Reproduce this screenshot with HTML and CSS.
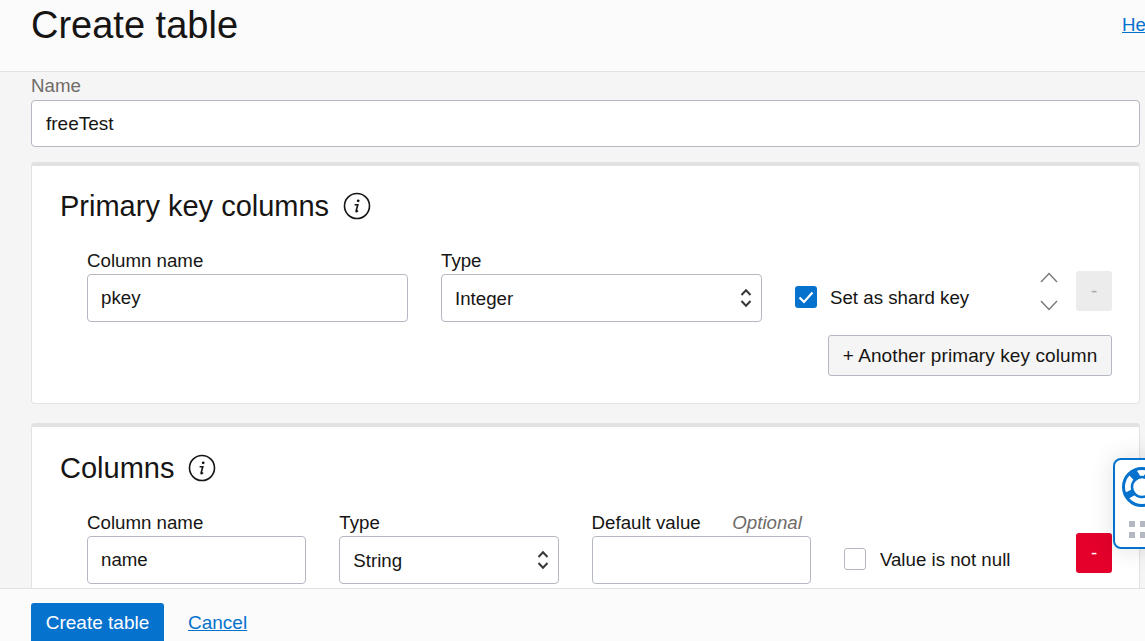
FILE: index.html
```html
<!DOCTYPE html>
<html lang="en">
<head>
    <meta charset="UTF-8">
    <meta name="viewport" content="width=device-width, initial-scale=1.0">
    <title>Create table</title>
    <link rel="stylesheet" href="styles.css">
</head>
<body>
    <div class="panel">
        <header class="panel-header">
            <h1>Create table</h1>
            <a class="help-link" href="#">Help</a>
        </header>

        <main class="panel-body">
            <label class="name-label" for="table-name">Name</label>
            <input class="text-input name-input" type="text" id="table-name" value="freeTest">

            <section class="card card-primary">
                <h2 class="card-title">
                    Primary key columns
                    <svg class="info-icon" viewBox="0 0 28 28" width="28" height="28">
                        <circle cx="14" cy="14" r="12.5" fill="none" stroke="#161513" stroke-width="1.6"/>
                        <circle cx="15.2" cy="8.8" r="1.4" fill="#161513"/>
                        <path d="M11.6 12.8h3.2l-1.7 6.2c-.2.8.7 1 1.9-.4" fill="none" stroke="#161513" stroke-width="1.6"/>
                    </svg>
                </h2>
                <div class="pk-row">
                    <div class="field field-wide">
                        <label for="pk-name">Column name</label>
                        <input class="text-input" type="text" id="pk-name" value="pkey">
                    </div>
                    <div class="field field-wide">
                        <label for="pk-type">Type</label>
                        <div class="select-wrap">
                            <select class="text-input" id="pk-type"><option>Integer</option></select>
                            <svg class="select-arrows" viewBox="0 0 12 22" width="12" height="22">
                                <path d="M1.5 8 6 3.2 10.5 8M1.5 14 6 18.8 10.5 14" fill="none" stroke="#3a3836" stroke-width="2"/>
                            </svg>
                        </div>
                    </div>
                    <label class="check check-on">
                        <span class="check-box">
                            <svg viewBox="0 0 22 22" width="22" height="22">
                                <path d="M4.5 11.5 9 16l8.5-9.5" fill="none" stroke="#fff" stroke-width="2.2"/>
                            </svg>
                        </span>
                        Set as shard key
                    </label>
                    <div class="move-arrows">
                        <svg viewBox="0 0 18 11" width="18" height="11"><path d="M1 10 9 1.5 17 10" fill="none" stroke="#7a7876" stroke-width="1.4"/></svg>
                        <svg viewBox="0 0 18 11" width="18" height="11"><path d="M1 1 9 9.5 17 1" fill="none" stroke="#7a7876" stroke-width="1.4"/></svg>
                    </div>
                    <button class="remove-btn" type="button" disabled>-</button>
                </div>
                <div class="add-row">
                    <button class="add-btn" type="button">+ Another primary key column</button>
                </div>
            </section>

            <section class="card card-columns">
                <h2 class="card-title">
                    Columns
                    <svg class="info-icon" viewBox="0 0 28 28" width="28" height="28">
                        <circle cx="14" cy="14" r="12.5" fill="none" stroke="#161513" stroke-width="1.6"/>
                        <circle cx="15.2" cy="8.8" r="1.4" fill="#161513"/>
                        <path d="M11.6 12.8h3.2l-1.7 6.2c-.2.8.7 1 1.9-.4" fill="none" stroke="#161513" stroke-width="1.6"/>
                    </svg>
                </h2>
                <div class="col-row">
                    <div class="field field-narrow">
                        <label for="col-name">Column name</label>
                        <input class="text-input" type="text" id="col-name" value="name">
                    </div>
                    <div class="field field-narrow">
                        <label for="col-type">Type</label>
                        <div class="select-wrap">
                            <select class="text-input" id="col-type"><option>String</option></select>
                            <svg class="select-arrows" viewBox="0 0 12 22" width="12" height="22">
                                <path d="M1.5 8 6 3.2 10.5 8M1.5 14 6 18.8 10.5 14" fill="none" stroke="#3a3836" stroke-width="2"/>
                            </svg>
                        </div>
                    </div>
                    <div class="field field-narrow">
                        <label class="label-split" for="col-default">Default value <em>Optional</em></label>
                        <input class="text-input" type="text" id="col-default">
                    </div>
                    <label class="check check-off">
                        <span class="check-box"></span>
                        Value is not null
                    </label>
                    <button class="remove-btn remove-active" type="button">-</button>
                </div>
            </section>
        </main>

        <footer class="panel-footer">
            <button class="primary-btn" type="button">Create table</button>
            <a class="cancel-link" href="#">Cancel</a>
        </footer>
    </div>

    <div class="help-widget">
        <svg viewBox="2 2 40 40" width="40" height="40">
            <circle cx="22" cy="22" r="18.5" fill="none" stroke="#0572ce" stroke-width="3"/>
            <circle cx="22" cy="22" r="10" fill="#fff" stroke="#0572ce" stroke-width="2.5"/>
            <path d="M9 10 16 4.5 21 12 15 16.5ZM8 34 4.5 28 12.5 24 16 29.5Z" fill="#0572ce"/>
            <path d="M35 10 28 4.5 23 12 29 16.5ZM36 34 39.5 28 31.5 24 28 29.5Z" fill="#0572ce"/>
        </svg>
        <div class="drag-dots">
            <span></span><span></span><span></span><span></span><span></span><span></span>
        </div>
    </div>
</body>
</html>
```

FILE: styles.css
```css
* {
    box-sizing: border-box;
}

html, body {
    height: 100%;
}

body {
    margin: 0;
    overflow: hidden;
    font-family: "Liberation Sans", Arial, sans-serif;
    font-size: 18.7px;
    color: #161513;
    background-color: #f5f5f5;
}

.panel {
    display: flex;
    flex-direction: column;
    height: 100vh;
}

.panel-header {
    flex: 0 0 72px;
    display: flex;
    justify-content: space-between;
    padding: 3px 0 0 31px;
    background-color: #fbfbfb;
    border-bottom: 1px solid #e4e2e0;
}

.panel-header h1 {
    margin: 0;
    font-size: 38px;
    font-weight: 400;
    line-height: 44px;
}

.help-link {
    flex: 0 0 23px;
    margin-top: 11px;
    overflow: hidden;
    color: #0572ce;
    white-space: nowrap;
}

.panel-body {
    flex: 1;
    min-height: 0;
    overflow: hidden;
    padding: 3px 5px 0 31px;
}

.name-label {
    display: block;
    line-height: 22px;
    margin-bottom: 3px;
    color: #6f6c69;
}

.text-input {
    display: block;
    width: 100%;
    height: 48px;
    padding: 0 13px;
    font-family: inherit;
    font-size: 18.7px;
    color: #161513;
    background-color: #fff;
    border: 1px solid #b4b8c1;
    border-radius: 4px;
    appearance: none;
}

.name-input {
    height: 47px;
    padding: 0 14px;
    font-size: 19px;
}

.text-input:focus {
    outline: none;
}

.card {
    margin-top: 15px;
    padding: 0 27px 0 28px;
    background-color: #fff;
    border: 1px solid #e4e2e0;
    border-top-width: 4px;
    border-radius: 4px;
}

.card-primary {
    height: 242px;
}

.card-columns {
    height: 180px;
    margin-top: 19px;
}

.card-title {
    display: flex;
    align-items: center;
    gap: 14px;
    margin: 0;
    padding-top: 21px;
    font-size: 29px;
    font-weight: 400;
    line-height: 38px;
}

.card-columns .card-title {
    padding-top: 22px;
}

.pk-row,
.col-row {
    display: flex;
    align-items: flex-start;
    margin-top: 25px;
    padding-left: 27px;
}

.field label {
    display: block;
    line-height: 22px;
    margin-bottom: 2px;
}

.field-wide {
    flex: 0 0 321px;
    margin-right: 33px;
}

.field-narrow {
    flex: 0 0 219.3px;
    margin-right: 33px;
}

.label-split {
    display: flex !important;
    justify-content: space-between;
    padding-right: 9px;
}

.label-split em {
    color: #6f6c69;
}

.select-wrap {
    position: relative;
}

.select-arrows {
    position: absolute;
    top: 13px;
    right: 10px;
    pointer-events: none;
}

.check {
    display: flex;
    align-items: center;
    gap: 13px;
    margin-top: 36px;
    height: 24px;
}

.check-box {
    flex: 0 0 22px;
    height: 22px;
    margin-top: -2px;
    border-radius: 3px;
}

.check-box svg {
    display: block;
}

.check-on .check-box {
    background-color: #0572ce;
}

.check-off {
    gap: 14px;
}

.check-off .check-box {
    background-color: #fff;
    border: 1px solid #b4b8c1;
}

.move-arrows {
    display: flex;
    flex-direction: column;
    gap: 17px;
    margin: 22px 0 0 auto;
}

.move-arrows svg {
    display: block;
}

.remove-btn {
    width: 36px;
    height: 40px;
    padding: 0;
    margin: 21px 0 0 18px;
    font-family: inherit;
    font-size: 18.7px;
    color: #a8a6a4;
    background-color: #ececec;
    border: 0;
    border-radius: 3px;
}

.remove-active {
    margin: 21px 0 0 auto;
    color: #fff;
    background-color: #e4002b;
}

.add-row {
    display: flex;
    justify-content: flex-end;
    margin-top: 13px;
}

.add-btn {
    width: 284px;
    height: 41px;
    padding: 0;
    font-family: inherit;
    font-size: 19px;
    letter-spacing: 0.1px;
    color: #161513;
    background-color: #f5f5f5;
    border: 1px solid #b4b8c1;
    border-radius: 3px;
}

.panel-footer {
    flex: 0 0 53px;
    display: flex;
    align-items: flex-start;
    gap: 24px;
    padding: 14px 0 0 31px;
    overflow: hidden;
    background-color: #fbfbfb;
    border-top: 1px solid #e4e2e0;
}

.primary-btn {
    width: 133px;
    height: 48px;
    padding: 0 0 8px;
    font-family: inherit;
    font-size: 19px;
    color: #fff;
    background-color: #0572ce;
    border: 0;
    border-radius: 3px;
}

.cancel-link {
    margin-top: 9px;
    color: #0572ce;
    font-size: 19px;
}

/* floating help tab, sits over the page and runs off the right edge */
.help-widget {
    position: absolute;
    top: 458px;
    left: 1113px;
    width: 60px;
    height: 91px;
    padding: 7px 0 0 7px;
    background-color: #fff;
    border: 2px solid #0572ce;
    border-radius: 8px;
    box-shadow: 0 0 24px rgba(0, 0, 0, 0.12);
}

.help-widget svg {
    display: block;
}

.drag-dots {
    display: grid;
    grid-template-columns: repeat(3, 6px);
    gap: 5px;
    margin: 14px 0 0 7px;
}

.drag-dots span {
    height: 6px;
    background-color: #b4b8c1;
}
```
